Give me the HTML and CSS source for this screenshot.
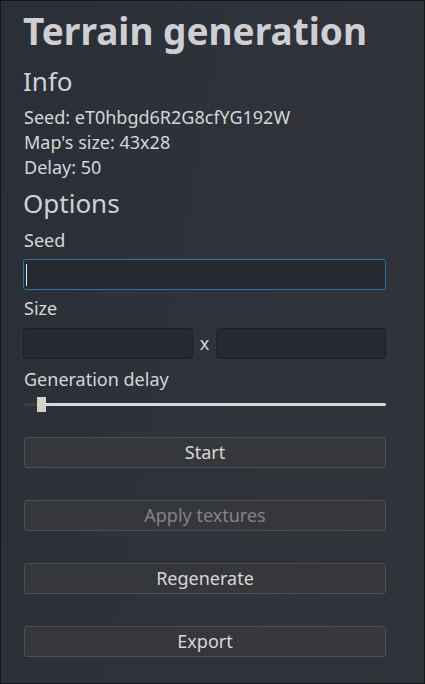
FILE: index.html
```html
<!DOCTYPE html>
<html>
<head>
<meta charset="utf-8">
<link rel="stylesheet" href="styles.css">
</head>
<body>
<div class="window">
  <h1 class="title">Terrain generation</h1>
  <h2 class="heading heading-info">Info</h2>
  <div class="info">
    <div class="line">Seed: eT0hbgd6R2G8cfYG192W</div>
    <div class="line">Map's size: 43x28</div>
    <div class="line">Delay: 50</div>
  </div>
  <h2 class="heading heading-options">Options</h2>
  <div class="label label-seed">Seed</div>
  <div class="input input-focus"><span class="caret"></span></div>
  <div class="label label-size">Size</div>
  <div class="size-row">
    <div class="input"></div>
    <span class="times">x</span>
    <div class="input"></div>
  </div>
  <div class="label label-delay">Generation delay</div>
  <div class="slider">
    <div class="track-done"></div>
    <div class="track-rest"></div>
    <div class="handle"></div>
  </div>
  <div class="button button-first">Start</div>
  <div class="button disabled">Apply textures</div>
  <div class="button">Regenerate</div>
  <div class="button">Export</div>
</div>
</body>
</html>
```
FILE: styles.css
```css
html, body {
  margin: 0;
  padding: 0;
  width: 425px;
  height: 684px;
  overflow: hidden;
}
body {
  font-family: "Noto Sans", "Open Sans", sans-serif;
  color: #d6d6d6;
}
.window {
  box-sizing: border-box;
  width: 425px;
  height: 684px;
  border: 1px solid #15161a;
  background: linear-gradient(100deg, #2a2e37 0%, #2e323a 45%, #31333a 75%, #2f323a 100%);
  padding: 0 38px 0 22px;
  display: flex;
  flex-direction: column;
}
.title {
  margin: 10px 0 0 0;
  font-size: 37px;
  font-weight: 700;
  line-height: 40px;
  color: #cfcfd1;
  white-space: nowrap;
}
.heading {
  margin: 0;
  font-size: 26px;
  font-weight: 400;
  line-height: 30px;
  color: #d2d2d4;
}
.heading-info { margin-top: 15px; }
.heading-options { margin-top: 8px; }
.info {
  margin-top: 9px;
  padding-left: 1px;
}
.line {
  font-size: 18px;
  line-height: 25px;
}
.label {
  font-size: 18px;
  line-height: 25px;
  padding-left: 1px;
}
.label-seed { margin-top: 10px; }
.label-size { margin-top: 6px; }
.label-delay { margin-top: 8px; }
.input {
  box-sizing: border-box;
  height: 31px;
  border: 1px solid #1f2126;
  border-radius: 3px;
  background: #262930;
  position: relative;
}
.input-focus {
  margin-top: 6px;
  border-color: #2f74a6;
}
.caret {
  position: absolute;
  left: 2px;
  top: 4px;
  width: 1px;
  height: 22px;
  background: #e6e6e6;
}
.size-row {
  margin-top: 7px;
  display: grid;
  grid-template-columns: 1fr auto 1fr;
  column-gap: 7px;
  align-items: center;
}
.times {
  font-size: 18px;
  line-height: 31px;
  color: #d6d6d6;
}
.slider {
  margin-top: 5px;
  height: 15px;
  position: relative;
  display: flex;
  align-items: center;
}
.track-done {
  width: 15px;
  height: 3px;
  background: #3b3e45;
  border-radius: 2px 0 0 2px;
}
.track-rest {
  flex: 1;
  height: 3px;
  background: #dadada;
  border-radius: 0 2px 2px 0;
}
.handle {
  position: absolute;
  left: 14px;
  top: 0;
  width: 9px;
  height: 15px;
  background: #d4d1ca;
}
.button {
  box-sizing: border-box;
  height: 31px;
  margin: 32px 0 0 1px;
  border: 1px solid #4d4e52;
  border-radius: 3px;
  background: #36373b;
  font-size: 18px;
  line-height: 29px;
  text-align: center;
  color: #d8d8d8;
}
.button-first { margin-top: 25px; }
.disabled { color: #838385; }
```
